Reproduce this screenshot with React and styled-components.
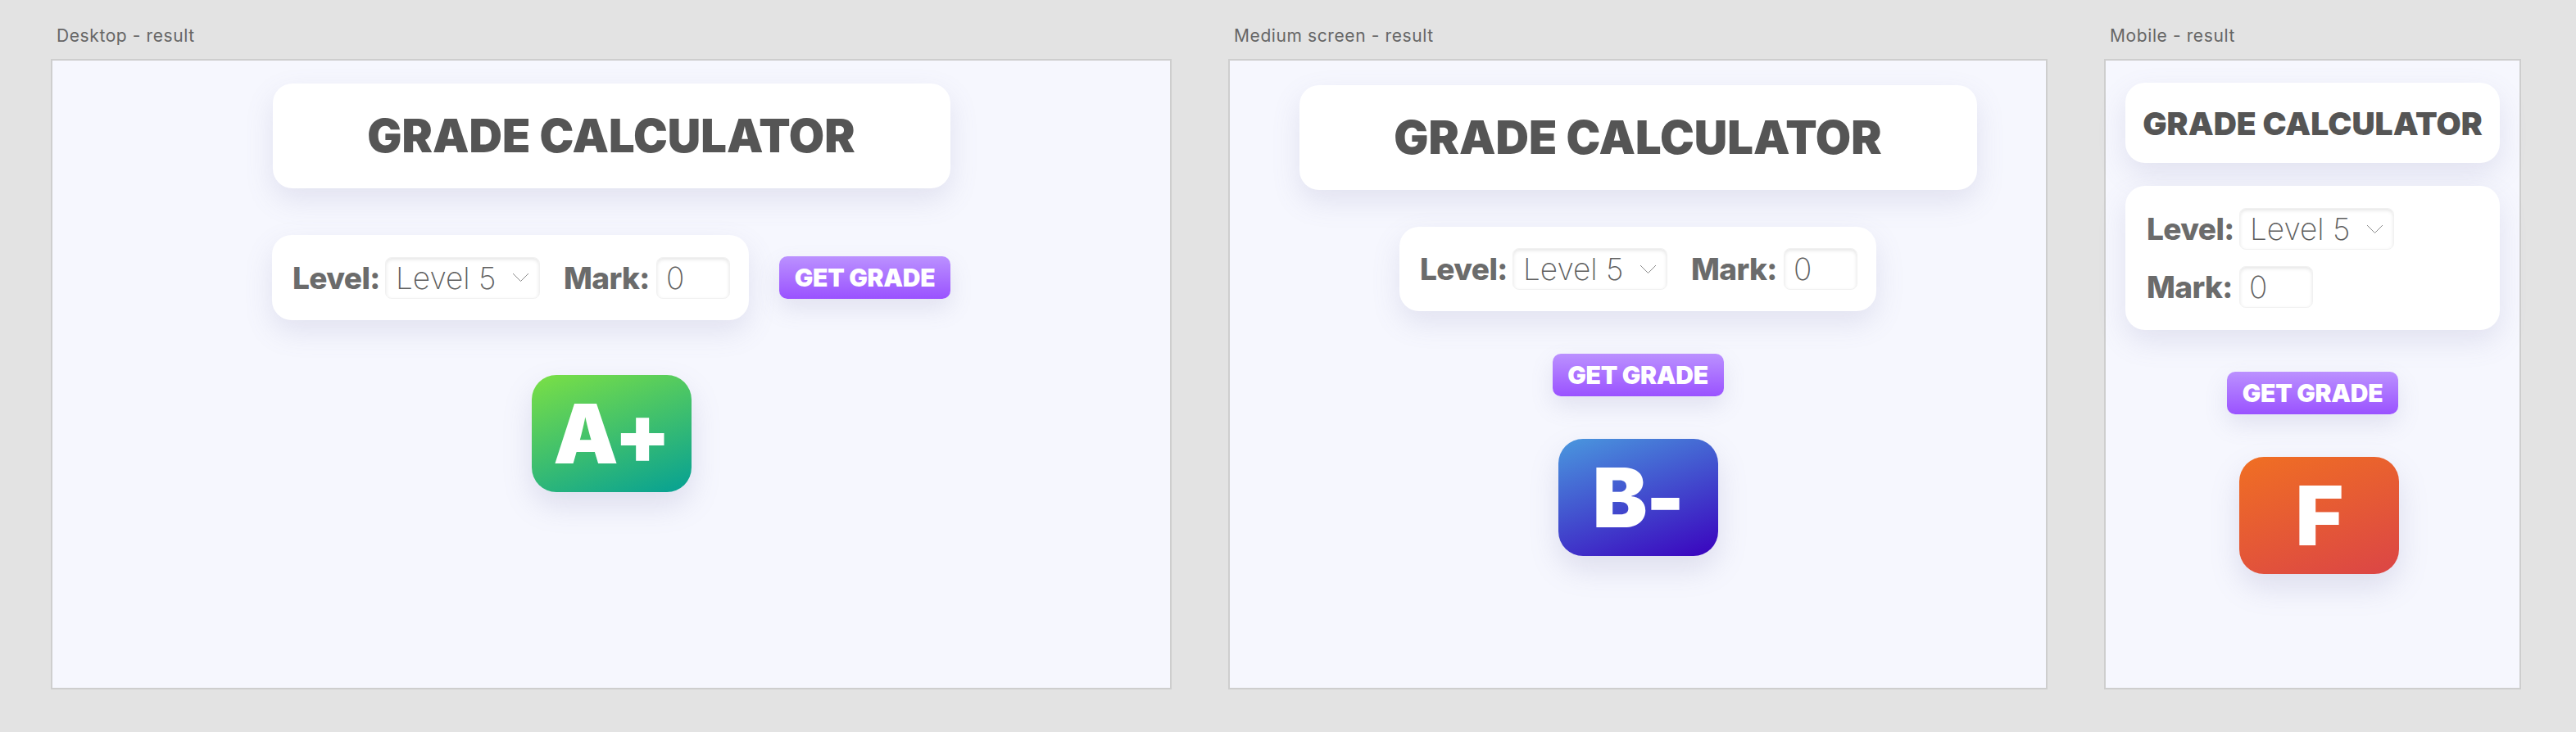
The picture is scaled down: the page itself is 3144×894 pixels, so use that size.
import React from "react";
import styled, { createGlobalStyle, css } from "styled-components";

const GlobalStyle = createGlobalStyle`
  html, body {
    margin: 0;
    padding: 0;
    background: #e3e3e3;
  }
  body {
    font-family: Inter, "Liberation Sans", sans-serif;
  }
`;

const Page = styled.div`
  display: flex;
  align-items: flex-start;
  gap: 69px;
  width: 3144px;
  height: 894px;
  box-sizing: border-box;
  padding: 32px 0 0 62px;
`;

const Panel = styled.section`
  display: flex;
  flex-direction: column;
  width: ${(p) => p.width}px;
`;

const Caption = styled.div`
  font-family: Inter, "Liberation Sans", sans-serif;
  font-size: 21px;
  line-height: 24px;
  letter-spacing: 0.6px;
  color: #666;
  padding-left: 7px;
  margin-bottom: 16px;
`;

const Frame = styled.div`
  height: 770px;
  box-sizing: border-box;
  border: 2px solid #cecece;
  background: #f6f7fe;
  display: flex;
  flex-direction: column;
  align-items: center;
  padding-top: ${(p) => p.top}px;
`;

const TitleCard = styled.div`
  box-sizing: border-box;
  display: flex;
  align-items: center;
  justify-content: center;
  background: #fff;
  border-radius: 24px;
  box-shadow: 0 14px 34px rgba(120, 120, 170, 0.16);
  width: ${(p) => (p.small ? 457 : 827)}px;
  height: ${(p) => (p.small ? 98 : 128)}px;

  h1 {
    margin: 0;
    font-family: Inter, "Liberation Sans", sans-serif;
    font-weight: 900;
    font-size: ${(p) => (p.small ? 39 : 56)}px;
    color: #555;
    white-space: nowrap;
  }
`;

const Controls = styled.div`
  display: flex;
  align-items: center;
  margin-top: ${(p) => p.top}px;
  ${(p) =>
    p.stacked
      ? css`
          flex-direction: column;
          gap: ${p.gap}px;
        `
      : css`
          flex-direction: row;
          gap: 37px;
        `}
`;

const FormCard = styled.div`
  box-sizing: border-box;
  display: flex;
  background: #fff;
  border-radius: 24px;
  box-shadow: 0 14px 34px rgba(120, 120, 170, 0.16);
  ${(p) =>
    p.stacked
      ? css`
          width: 457px;
          height: 176px;
          flex-direction: column;
          justify-content: center;
          gap: 20px;
          padding: 0 26px;
        `
      : css`
          width: 582px;
          height: ${p.h}px;
          flex-direction: row;
          align-items: center;
          gap: 29px;
          padding: 0 24px 0 25px;
        `}
`;

const Field = styled.label`
  display: flex;
  align-items: center;
  gap: 7px;
`;

const FieldName = styled.span`
  width: 106px;
  white-space: nowrap;
  font-family: Inter, "Liberation Sans", sans-serif;
  font-weight: 800;
  font-size: 37px;
  letter-spacing: -0.6px;
  color: #6b6b6b;
`;

const inputBox = css`
  box-sizing: border-box;
  height: 51px;
  background: #fff;
  border: 1px solid #f1f1f1;
  border-radius: 8px;
  box-shadow: inset 0 2px 4px rgba(0, 0, 0, 0.1);
`;

const SelectBox = styled.div`
  ${inputBox}
  width: 189px;
  display: flex;
  align-items: center;
  padding: 0 12px 0 12px;

  svg {
    flex: none;
  }
`;

const Select = styled.select`
  appearance: none;
  flex: 1;
  min-width: 0;
  border: none;
  background: transparent;
  outline: none;
  padding: 0;
  font-family: Inter, "Liberation Sans", sans-serif;
  font-weight: 200;
  font-size: 37px;
  color: #5f5f5f;
`;

const MarkInput = styled.input`
  ${inputBox}
  width: 90px;
  padding: 0 0 0 11px;
  outline: none;
  font-family: Inter, "Liberation Sans", sans-serif;
  font-weight: 200;
  font-size: 37px;
  color: #5f5f5f;
`;

const GradeButton = styled.button`
  width: 209px;
  height: 52px;
  border: none;
  border-radius: 10px;
  background: linear-gradient(180deg, #bb91ff 0%, #9a52ff 100%);
  box-shadow: 0 12px 28px rgba(120, 120, 170, 0.16);
  color: #fff;
  font-family: Inter, "Liberation Sans", sans-serif;
  font-weight: 900;
  font-size: 30px;
  letter-spacing: -0.3px;
  cursor: pointer;
`;

const gradients = {
  "A+": "linear-gradient(160deg, #7be045 0%, #05a094 100%)",
  "B-": "linear-gradient(160deg, #4a98de 0%, #3a02be 100%)",
  F: "linear-gradient(160deg, #f06f23 0%, #db4546 100%)",
};

const GradeBox = styled.div`
  width: 195px;
  height: 143px;
  margin-top: ${(p) => p.top}px;
  margin-left: ${(p) => p.shift || 0}px;
  border-radius: 30px;
  background: ${(p) => gradients[p.grade]};
  box-shadow: 0 16px 36px rgba(120, 120, 170, 0.2);
  display: flex;
  align-items: center;
  justify-content: center;
  color: #fff;
  font-family: Inter, "Liberation Sans", sans-serif;
  font-weight: 900;
  font-size: 100px;
  letter-spacing: -2px;
`;

const Chevron = () => (
  <svg width="21" height="12" viewBox="0 0 21 12">
    <polyline points="1,1 10.5,10.5 20,1" fill="none" stroke="#8a8a8a" strokeWidth="1" />
  </svg>
);

const layouts = {
  desktop: { width: 1368, top: 28, controlsTop: 57, formH: 104, gradeTop: 67 },
  medium: { width: 1000, top: 30, controlsTop: 45, formH: 103, gradeTop: 52, stacked: true, gap: 52 },
  mobile: { width: 509, top: 27, controlsTop: 28, gradeTop: 52, stacked: true, gap: 51, small: true, shift: 15 },
};

const Calculator = ({ caption, kind, grade }) => {
  const l = layouts[kind];
  return (
    <Panel width={l.width}>
      <Caption>{caption}</Caption>
      <Frame top={l.top}>
        <TitleCard small={l.small}>
          <h1>GRADE CALCULATOR</h1>
        </TitleCard>
        <Controls top={l.controlsTop} stacked={l.stacked} gap={l.gap}>
          <FormCard stacked={l.small} h={l.formH}>
            <Field>
              <FieldName>Level:</FieldName>
              <SelectBox>
                <Select defaultValue="5">
                  <option value="4">Level 4</option>
                  <option value="5">Level 5</option>
                  <option value="6">Level 6</option>
                </Select>
                <Chevron />
              </SelectBox>
            </Field>
            <Field>
              <FieldName>Mark:</FieldName>
              <MarkInput type="text" defaultValue="0" />
            </Field>
          </FormCard>
          <GradeButton>GET GRADE</GradeButton>
        </Controls>
        <GradeBox grade={grade} top={l.gradeTop} shift={l.shift}>
          {grade}
        </GradeBox>
      </Frame>
    </Panel>
  );
};

export default function App() {
  return (
    <>
      <GlobalStyle />
      <Page>
        <Calculator caption="Desktop - result" kind="desktop" grade="A+" />
        <Calculator caption="Medium screen - result" kind="medium" grade="B-" />
        <Calculator caption="Mobile - result" kind="mobile" grade="F" />
      </Page>
    </>
  );
}
